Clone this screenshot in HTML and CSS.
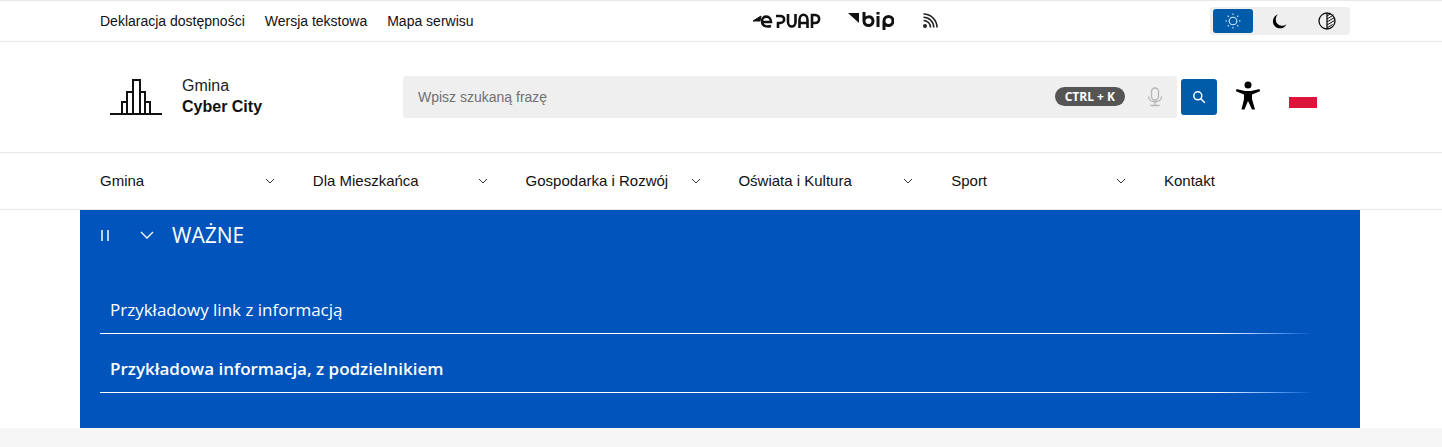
FILE: index.html
```html
<!DOCTYPE html>
<html lang="pl">
<head>
<meta charset="UTF-8">
<meta name="viewport" content="width=device-width, initial-scale=1.0">
<title>Gmina Cyber City</title>
<link rel="stylesheet" href="styles.css">
</head>
<body>

<div class="topbar">
    <div class="container topbar-inner">
        <nav class="top-links">
            <a href="#">Deklaracja dostępności</a>
            <a href="#">Wersja tekstowa</a>
            <a href="#">Mapa serwisu</a>
        </nav>
        <div class="top-services">
            <svg class="epuap" width="70" height="16" viewBox="0 0 70 16" fill="none" stroke="#111" stroke-width="2.600" aria-label="ePUAP">
                <path d="M1 8 9 3 8 8 Z" fill="#111" stroke-width="1"/>
                <path d="M11 9h8c0-7-9-7-9 -1 0 6 6 6 9 5"/>
                <path d="M24 3h4c5.500 0 5.500 7 0 7h-2v5"/>
                <path d="M36 1v8c0 6 7.500 6 7.500 0V1"/>
                <path d="M47.500 15V7c0-7 8-7 8 0v8M47.500 10h8"/>
                <path d="M60 15V2h3c5.500 0 5.500 8 0 8h-2"/>
            </svg>
            <svg class="bip" width="46" height="18" viewBox="0 0 46 18" fill="none" stroke="#111" stroke-width="3" aria-label="bip">
                <path d="M0 1h11v10Z" fill="#111" stroke="none"/>
                <path d="M16 0v9c0 6 9 6 9 0s-9-5-9 0"/>
                <path d="M30 4v11M30 0v2.500"/>
                <path d="M36 18V9c0-6 9-6 9 0s-9 6-9 0"/>
            </svg>
            <svg width="16" height="16" viewBox="0 0 16 16" fill="none" stroke="#222" stroke-width="1.600" aria-label="RSS">
                <circle cx="3" cy="13" r="2" fill="#222" stroke="none"/>
                <path d="M1.500 7.500a7 7 0 0 1 7 7M1.500 4.200a10.300 10.300 0 0 1 10.300 10.300M1.500 1a13.500 13.500 0 0 1 13.500 13.500"/>
            </svg>
        </div>
        <div class="theme-switch">
            <button class="theme-btn active" aria-label="Jasny">
                <svg width="16" height="16" viewBox="0 0 16 16" fill="none" stroke="#d6e8ff" stroke-width="1.100">
                    <circle cx="8" cy="8" r="3.800"/>
                    <path d="M8 .5v1.600M8 13.900v1.600M.5 8h1.600M13.900 8h1.600M2.700 2.700 3.800 3.800M12.200 12.200l1.100 1.100M2.700 13.300 3.800 12.200M12.200 3.800l1.100-1.100"/>
                </svg>
            </button>
            <button class="theme-btn" aria-label="Ciemny">
                <svg width="15" height="15" viewBox="0 0 14 14"><path d="M5.500.5a6.600 6.600 0 1 0 8 9A6 6 0 0 1 5.500.5Z" fill="#000"/></svg>
            </button>
            <button class="theme-btn" aria-label="Kontrast">
                <svg width="18" height="18" viewBox="0 0 18 18" fill="none" stroke="#111" stroke-width="1.300">
                    <circle cx="9" cy="9" r="8"/>
                    <path d="M9 1v16"/>
                    <path d="M9 4l4-2.500M9 7l6.500-4M9 10l7.500-4.500M9 13l7.500-4.500M9 16l5.500-3.500" stroke-width="1"/>
                </svg>
            </button>
        </div>
    </div>
</div>

<header class="header">
    <div class="container header-inner">
        <a class="logo" href="#">
            <svg width="52" height="36" viewBox="0 0 52 36" fill="none" stroke="#111" stroke-width="2">
                <path d="M0 35h52"/>
                <path d="M12 35V23h5M17 35V13h6M23 35V1h7v34M30 13h5v22M35 23h5v12"/>
            </svg>
            <span class="logo-text">
                <span>Gmina</span>
                <strong>Cyber City</strong>
            </span>
        </a>
        <form class="search">
            <div class="search-box">
                <span class="search-label">Wpisz szukaną frazę</span>
                <span class="kbd">CTRL + K</span>
                <svg width="16" height="20" viewBox="0 0 16 20" fill="none" stroke="#b5b5b5" stroke-width="1.300">
                    <rect x="4.500" y="1" width="7" height="12" rx="3.500"/>
                    <path d="M1.500 9.500c0 7 13 7 13 0M8 15v3M3.500 18.500h9"/>
                </svg>
            </div>
            <button class="search-btn" type="button" aria-label="Szukaj">
                <svg width="14" height="14" viewBox="0 0 14 14" fill="none" stroke="#fff" stroke-width="1.500">
                    <circle cx="5.800" cy="5.800" r="4"/>
                    <path d="m8.800 8.800 4 4"/>
                </svg>
            </button>
        </form>
        <a class="access" href="#" aria-label="Dostępność">
            <svg width="24" height="30" viewBox="0 0 24 30">
                <circle cx="12" cy="4" r="3.500" fill="#000"/>
                <path d="M.5 8 9 10h6l8.500-2 .5 2.200-8 3.300V18l3 10.500h-3L12 20l-3.500 8.500h-3L8 18v-4.500L0 10.200Z" fill="#000"/>
            </svg>
        </a>
        <a class="flag" href="#" aria-label="Polski"></a>
    </div>
</header>

<nav class="mainnav">
    <div class="container mainnav-inner">
        <a class="nav-item" href="#">Gmina <svg class="chev" viewBox="0 0 10 6"><path d="m1 1 4 4 4-4"/></svg></a>
        <a class="nav-item" href="#">Dla Mieszkańca <svg class="chev" viewBox="0 0 10 6"><path d="m1 1 4 4 4-4"/></svg></a>
        <a class="nav-item" href="#">Gospodarka i Rozwój <svg class="chev" viewBox="0 0 10 6"><path d="m1 1 4 4 4-4"/></svg></a>
        <a class="nav-item" href="#">Oświata i Kultura <svg class="chev" viewBox="0 0 10 6"><path d="m1 1 4 4 4-4"/></svg></a>
        <a class="nav-item" href="#">Sport <svg class="chev" viewBox="0 0 10 6"><path d="m1 1 4 4 4-4"/></svg></a>
        <a class="nav-item" href="#">Kontakt</a>
    </div>
</nav>

<section class="alerts">
    <div class="alerts-head">
        <span class="pause"></span>
        <svg class="alerts-chev" viewBox="0 0 14 8"><path d="m1 1 6 6 6-6"/></svg>
        <h2>WAŻNE</h2>
    </div>
    <div class="alert-row">Przykładowy link z informacją</div>
    <div class="alert-row bold">Przykładowa informacja, z podzielnikiem</div>
</section>

<div class="page-bottom"></div>

</body>
</html>
```

FILE: styles.css
```css
* {
    box-sizing: border-box;
}
html, body {
    height: 100%;
}
body {
    margin: 0;
    background-color: #fff;
    color: #111;
    font-family: "Liberation Sans", Arial, sans-serif;
    font-size: 14px;
    overflow: hidden;
}
a {
    color: inherit;
    text-decoration: none;
}
button {
    border: none;
    padding: 0;
    background: none;
}
.container {
    width: 1280px;
    margin-left: 80px;
    padding: 0 20px;
}

/* top bar */
.topbar {
    height: 42px;
    border-top: 1px solid #e8e8e8;
    border-bottom: 1px solid #e8e8e8;
}
.topbar-inner {
    display: flex;
    align-items: center;
    height: 100%;
    padding-right: 10px;
}
.top-links {
    display: flex;
    gap: 20px;
    width: 652px;
}
.top-services {
    display: flex;
    align-items: center;
    width: 458px;
}
.epuap {
    margin-right: 26px;
}
.bip {
    margin-right: 28px;
}
.theme-switch {
    display: flex;
    width: 140px;
    height: 28px;
    padding: 2px 3px;
    border-radius: 3px;
    background-color: #efefef;
}
.theme-btn {
    display: flex;
    align-items: center;
    justify-content: center;
    width: 40px;
    height: 24px;
    margin-right: 7px;
    border-radius: 3px;
}
.theme-btn:last-child {
    margin-left: 1px;
    margin-right: 0;
}
.theme-btn.active {
    background-color: #005ca9;
}

/* logo and search */
.header {
    height: 111px;
    border-bottom: 1px solid #e8e8e8;
}
.header-inner {
    display: flex;
    align-items: center;
    height: 100%;
    padding-left: 30px;
}
.logo {
    display: flex;
    align-items: center;
    gap: 20px;
    width: 293px;
    margin-top: -1px;
}
.logo-text {
    display: flex;
    flex-direction: column;
    gap: 3px;
    font-size: 16px;
    line-height: 18px;
}
.logo-text span {
    color: #222;
}
.search {
    display: flex;
    align-items: center;
    gap: 4px;
    width: 814px;
    margin-top: -1px;
}
.search-box {
    display: flex;
    align-items: center;
    width: 774px;
    height: 42px;
    padding: 0 14px 0 15px;
    border-radius: 3px;
    background-color: #efefef;
}
.search-label {
    flex: 1;
    color: #6f6f6f;
}
.kbd {
    margin-right: 22px;
    padding: 0 10px;
    border-radius: 10px;
    background-color: #555;
    color: #fff;
    font-family: "Open Sans", sans-serif;
    font-size: 12px;
    font-weight: 700;
    line-height: 19px;
}
.search-btn {
    display: flex;
    align-items: center;
    justify-content: center;
    width: 36px;
    height: 36px;
    border-radius: 3px;
    background-color: #005ca9;
}
.access {
    display: flex;
    margin-left: 19px;
    margin-top: -2px;
}
.flag {
    width: 28px;
    height: 11px;
    margin-left: 29px;
    margin-top: 10px;
    background-color: #dc143c;
}

/* main menu */
.mainnav {
    height: 57px;
    border-bottom: 1px solid #e8e8e8;
}
.mainnav-inner {
    display: grid;
    grid-template-columns: repeat(6, 212.8px);
    align-items: center;
    height: 100%;
    padding-bottom: 2px;
    font-size: 15px;
}
.nav-item {
    display: flex;
    align-items: center;
    justify-content: space-between;
    width: 175px;
}
.chev {
    width: 10px;
    height: 6px;
    margin-top: 2px;
    fill: none;
    stroke: #333;
    stroke-width: 1;
}

/* blue box */
.alerts {
    width: 1280px;
    height: 218px;
    margin-left: 80px;
    padding: 0 20px;
    background-color: #0054bc;
    color: #fff;
    font-family: "Open Sans", sans-serif;
}
.alerts-head {
    display: flex;
    align-items: center;
    height: 50px;
}
.pause {
    width: 8px;
    height: 11px;
    margin-left: 1px;
    margin-right: 31px;
    border-left: 2px solid #bcd2f2;
    border-right: 2px solid #bcd2f2;
}
.alerts-chev {
    width: 14px;
    height: 8px;
    margin-right: 18px;
    fill: none;
    stroke: #fff;
    stroke-width: 1.300;
}
.alerts-head h2 {
    margin: 0;
    font-size: 21px;
    font-weight: 400;
}
.alert-row {
    display: flex;
    align-items: flex-end;
    height: 59px;
    padding: 0 10px 13px;
    font-size: 17px;
    position: relative;
}
.alert-row:nth-child(2) {
    margin-top: 15px;
}
.alert-row::after {
    content: '';
    position: absolute;
    left: 0;
    right: 27px;
    bottom: 0;
    height: 1px;
    background: linear-gradient(to right, #fff 92%, #5fa0ff 97%, #0054bc 100%);
}
.bold {
    font-weight: 600;
}
.page-bottom {
    height: 19px;
    background-color: #f6f6f6;
}
```
